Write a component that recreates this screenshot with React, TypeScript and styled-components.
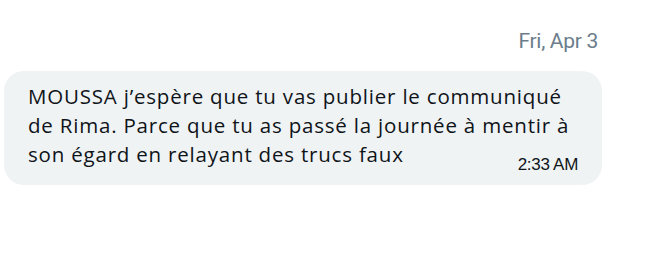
import styled, { createGlobalStyle } from "styled-components";

const Global = createGlobalStyle`
  html, body {
    margin: 0;
    padding: 0;
    background: #ffffff;
  }
  body {
    font-family: "Open Sans", Roboto, sans-serif;
    color: #0f1419;
  }
`;

function App() {
  return (
    <Page>
      <Global />
      <DayRow>
        <DayLabel>Fri, Apr 3</DayLabel>
      </DayRow>
      <Bubble>
        <MessageText>
          MOUSSA j’espère que tu vas publier le communiqué de Rima. Parce que tu
          as passé la journée à mentir à son égard en relayant des trucs faux
          <Time>2:33 AM</Time>
        </MessageText>
      </Bubble>
    </Page>
  );
}

const Page = styled.div`
  width: 648px;
  height: 256px;
  display: flex;
  flex-direction: column;
  align-items: flex-start;
  padding-top: 26px;
  box-sizing: border-box;
`;

const DayRow = styled.div`
  align-self: stretch;
  display: flex;
  justify-content: flex-end;
  align-items: center;
  padding-right: 50px;
  height: 30px;
`;

const DayLabel = styled.span`
  font-family: Roboto, sans-serif;
  font-size: 21px;
  color: #6b7d8b;
  letter-spacing: -0.3px;
`;

const Bubble = styled.div`
  display: flow-root;
  margin: 15px 0 0 4px;
  width: 598px;
  box-sizing: border-box;
  background: #eff3f4;
  border-radius: 20px;
  padding: 11px 24px 10px 24px;
`;

const MessageText = styled.div`
  font-size: 20.5px;
  letter-spacing: 0.8px;
  line-height: 29px;
  color: #0f1419;
`;

const Time = styled.span`
  float: right;
  margin-top: 15px;
  font-family: "Liberation Sans", Arial, sans-serif;
  font-size: 17px;
  letter-spacing: -0.3px;
  line-height: 20px;
  color: #0f1419;
`;

export default App;
